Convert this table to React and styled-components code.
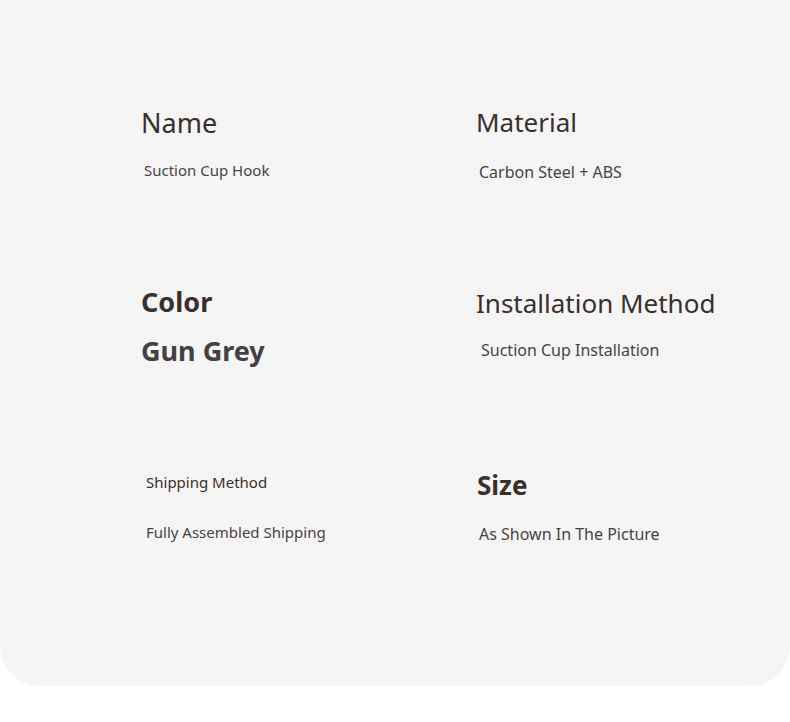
import React from 'react';
import styled, { createGlobalStyle } from 'styled-components';

const GlobalStyle = createGlobalStyle`
  html, body {
    margin: 0;
    padding: 0;
    background: #ffffff;
  }
  body {
    font-family: "Noto Sans", "Open Sans", sans-serif;
  }
`;

const Panel = styled.section`
  width: 790px;
  height: 686px;
  box-sizing: border-box;
  background: #f5f5f5;
  border-radius: 0 0 40px 40px;
  padding: 100px 0 0 141px;
`;

const Grid = styled.div`
  display: grid;
  grid-template-columns: 335px 1fr;
  grid-auto-rows: 180px;
`;

const Cell = styled.div`
  display: flex;
  flex-direction: column;
  align-items: flex-start;
  padding-top: ${(p) => p.$top}px;
  gap: ${(p) => p.$gap}px;
`;

const Heading = styled.div`
  font-size: ${(p) => p.$size}px;
  font-weight: ${(p) => (p.$bold ? 700 : 400)};
  line-height: 1.2;
  color: ${(p) => p.$color || '#3b2f2b'};
  margin-left: ${(p) => p.$indent || 0}px;
  white-space: nowrap;
`;

const Value = styled.div`
  font-size: ${(p) => p.$size}px;
  font-weight: ${(p) => (p.$bold ? 700 : 400)};
  line-height: 1.2;
  color: ${(p) => p.$color || '#474343'};
  margin-left: ${(p) => p.$indent || 0}px;
  white-space: nowrap;
`;

const specs = [
  {
    key: 'name',
    top: 7,
    gap: 22,
    heading: { text: 'Name', size: 27 },
    value: { text: 'Suction Cup Hook', size: 15, indent: 3 },
  },
  {
    key: 'material',
    top: 7,
    gap: 25,
    heading: { text: 'Material', size: 26 },
    value: { text: 'Carbon Steel + ABS', size: 16, indent: 3 },
  },
  {
    key: 'color',
    top: 6,
    gap: 17,
    heading: { text: 'Color', size: 27, bold: true },
    value: { text: 'Gun Grey', size: 27, bold: true, color: '#444141' },
  },
  {
    key: 'install',
    top: 8,
    gap: 22,
    heading: { text: 'Installation Method', size: 26 },
    value: { text: 'Suction Cup Installation', size: 16, indent: 5 },
  },
  {
    key: 'shipping',
    top: 13,
    gap: 32,
    heading: { text: 'Shipping Method', size: 15, indent: 5 },
    value: { text: 'Fully Assembled Shipping', size: 15, indent: 5 },
  },
  {
    key: 'size',
    top: 10,
    gap: 24,
    heading: { text: 'Size', size: 26, bold: true, indent: 1 },
    value: { text: 'As Shown In The Picture', size: 16, indent: 3 },
  },
];

export default function App() {
  return (
    <>
      <GlobalStyle />
      <Panel>
        <Grid>
          {specs.map((s) => (
            <Cell key={s.key} $top={s.top} $gap={s.gap}>
              <Heading
                $size={s.heading.size}
                $bold={s.heading.bold}
                $indent={s.heading.indent}
              >
                {s.heading.text}
              </Heading>
              <Value
                $size={s.value.size}
                $bold={s.value.bold}
                $indent={s.value.indent}
                $color={s.value.color}
              >
                {s.value.text}
              </Value>
            </Cell>
          ))}
        </Grid>
      </Panel>
    </>
  );
}
